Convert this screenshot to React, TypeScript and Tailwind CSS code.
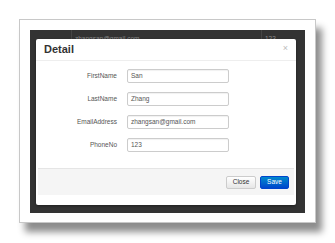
import React from 'react';

const fields = [
  { label: 'FirstName', value: 'San' },
  { label: 'LastName', value: 'Zhang' },
  { label: 'EmailAddress', value: 'zhangsan@gmail.com' },
  { label: 'PhoneNo', value: '123' },
];

const App = () => {
  return (
    <div className="w-[335px] h-[243px] bg-white pt-[19px] pl-[19px] font-['Liberation_Sans',Arial,sans-serif]">
      <div className="w-[297px] h-[204px] border border-[#c8c8c8] bg-white p-[10px] shadow-[6px_9px_7px_rgba(0,0,0,0.45)]">
        <div className="relative w-[275px] h-[183px] bg-[#333333] overflow-hidden">
          {/* table row behind the modal */}
          <div className="flex h-[9px] text-[6.5px] leading-none text-[#8a8a8a]">
            <div className="w-[42px] border-r border-[#454545]" />
            <div className="w-[190px] border-r border-[#454545] pl-[3px] pt-[6px]">zhangsan@gmail.com</div>
            <div className="pl-[3px] pt-[6px]">123</div>
          </div>

          <div className="absolute left-[6px] top-[9px] w-[260px] h-[166px] bg-white rounded-[2px] shadow-[0_1px_3px_rgba(0,0,0,0.4)] flex flex-col">
            <div className="h-[22px] flex items-center justify-between pl-[8px] pr-[8px] border-b border-[#eeeeee]">
              <span className="text-[11px] font-bold text-[#333333] leading-none">Detail</span>
              <span className="text-[9px] text-[#bbbbbb] leading-none -mt-[2px]">×</span>
            </div>

            <div className="flex flex-col gap-[9px] pt-[8px] pb-[16px]">
              {fields.map((f) => (
                <div key={f.label} className="flex items-center h-[14px]">
                  <div className="w-[81px] text-right text-[6.5px] text-[#555555] leading-none">{f.label}</div>
                  <div className="ml-[10px] w-[102px] h-[14px] border border-[#cccccc] rounded-[2px] shadow-[inset_0_1px_1px_rgba(0,0,0,0.06)] flex items-center pl-[3px] text-[6.5px] text-[#555555] leading-none">
                    {f.value}
                  </div>
                </div>
              ))}
            </div>

            <div className="mx-[2px] h-[27px] bg-[#f5f5f5] border-t border-[#e5e5e5] flex items-center justify-end gap-[4px] pr-[5px]">
              <button className="w-[30px] h-[13px] rounded-[2px] border border-[#cccccc] bg-gradient-to-b from-white to-[#e6e6e6] text-[6.5px] text-[#333333] leading-none">
                Close
              </button>
              <button className="w-[29px] h-[13px] rounded-[2px] border border-[#0044cc] bg-gradient-to-b from-[#0088cc] to-[#0044cc] text-[6.5px] text-white leading-none">
                Save
              </button>
            </div>
          </div>
        </div>
      </div>
    </div>
  );
};

export default App;
